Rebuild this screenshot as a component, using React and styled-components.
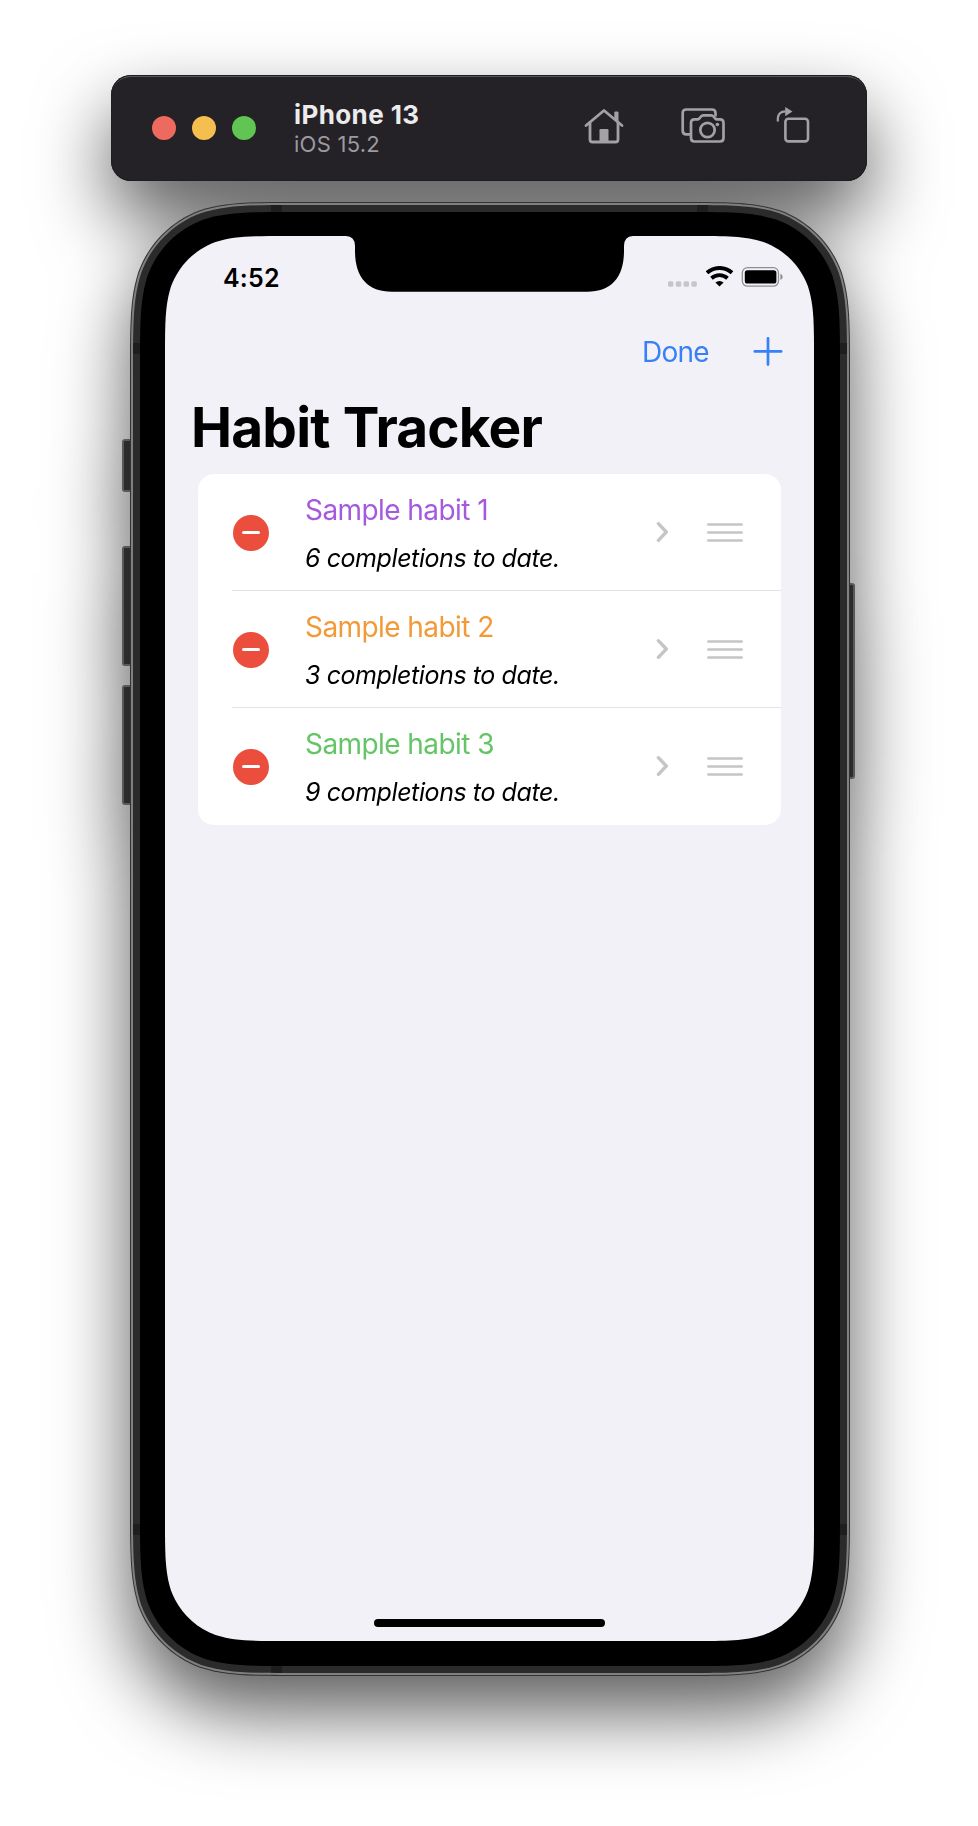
import React from "react";
import styled, { createGlobalStyle } from "styled-components";

const GlobalStyle = createGlobalStyle`
  html, body { margin: 0; padding: 0; background: #fff; }
  *, *::before, *::after { box-sizing: border-box; }
  body { font-family: Inter, "Liberation Sans", sans-serif; }
  svg { display: block; }
`;

// Rounded rectangle with continuous-curvature corners.
const smoothRect = (w, h, r) => {
  const p = [
    [1.528665, 0], [1.088493, 0], [0.868407, 0], [0.631494, 0.074911],
    [0.372824, 0.169059], [0.169059, 0.372824], [0.074911, 0.631494],
    [0, 0.868407], [0, 1.088493], [0, 1.528665],
  ].map(([a, b]) => [a * r, b * r]);
  const corner = (pts, fx, fy) => {
    const q = pts.map(([x, y]) => `${(fx ? w - x : x).toFixed(2)} ${(fy ? h - y : y).toFixed(2)}`);
    return `L${q[0]}C${q[1]} ${q[2]} ${q[3]}C${q[4]} ${q[5]} ${q[6]}C${q[7]} ${q[8]} ${q[9]}`;
  };
  const rev = [...p].reverse();
  return (
    "M" + w / 2 + " 0" + corner(p, true, false) + corner(rev, true, true) +
    corner(p, false, true) + corner(rev, false, false) + "Z"
  );
};

const Stage = styled.main`
  width: 978px;
  height: 1826px;
  padding-top: 75px;
  overflow: hidden;
`;

const Windows = styled.div`
  display: flex;
  flex-direction: column;
  gap: 21px;
  filter: drop-shadow(0 36px 37px rgba(0, 0, 0, 0.64));
`;

const TitleBar = styled.header`
  display: flex;
  align-items: center;
  width: 756px;
  height: 106px;
  margin-left: 111px;
  padding: 0 57px 0 41px;
  border-radius: 20px;
  background: #242227;
  box-shadow: inset 0 0 0 1px #1c1e1f, inset 0 2px 0 #55585a;
`;

const Lights = styled.div`
  display: flex;
  gap: 16px;
`;

const Light = styled.span`
  width: 24px;
  height: 24px;
  border-radius: 50%;
  background: ${(p) => p.$color};
`;

const DeviceLabel = styled.div`
  flex: 1;
  margin-left: 38px;
  padding-top: 1px;
`;

const DeviceName = styled.div`
  font-size: 26px;
  font-weight: 700;
  line-height: 32px;
  letter-spacing: 0.4px;
  color: #ececec;
`;

const DeviceOS = styled.div`
  font-size: 22px;
  line-height: 27px;
  letter-spacing: 0.25px;
  color: #9c999f;
`;

const Tools = styled.div`
  display: flex;
  align-items: center;
  padding-bottom: 4px;
`;

const Tool = styled.button`
  border: 0;
  padding: 0;
  margin-left: ${(p) => p.$gap || 0}px;
  background: none;
  color: #a3a0a6;
`;

const Phone = styled.section`
  position: relative;
  width: 720px;
  height: 1474px;
  margin-left: 130px;
`;

const SideButton = styled.span`
  position: absolute;
  left: ${(p) => (p.$right ? 716 : -8)}px;
  top: ${(p) => p.$top}px;
  width: ${(p) => (p.$right ? 9 : 12)}px;
  height: ${(p) => p.$height}px;
  border: 2px solid #58595a;
  border-radius: 3px;
  background: #2b2b2b;
`;

const Edge = styled.div`
  position: relative;
  width: 720px;
  height: 1474px;
  padding: 1px;
  background: #303234;
  clip-path: path("${smoothRect(720, 1474, 111)}");
`;

const Highlight = styled.div`
  width: 718px;
  height: 1472px;
  padding: 2px;
  background: #7f8081;
  clip-path: path("${smoothRect(718, 1472, 110)}");
`;

const Chassis = styled.div`
  position: relative;
  width: 714px;
  height: 1468px;
  padding: 7px;
  background: #2b2b2b;
  clip-path: path("${smoothRect(714, 1468, 108)}");
`;

const Antenna = styled.span`
  position: absolute;
  left: ${(p) => p.$x}px;
  top: ${(p) => p.$y}px;
  width: 11px;
  height: 11px;
  background: #1e1e1e;
`;

const Bezel = styled.div`
  position: relative;
  width: 700px;
  height: 1454px;
  padding: 24px 26px 25px 25px;
  background: #000;
  clip-path: path("${smoothRect(700, 1454, 101)}");
`;

const Screen = styled.div`
  position: relative;
  display: flex;
  flex-direction: column;
  width: 649px;
  height: 1405px;
  background: #f2f1f7;
  clip-path: path("${smoothRect(649, 1405, 80)}");
`;

const Notch = styled.svg`
  position: absolute;
  left: 181px;
  top: 0;
`;

const StatusBar = styled.div`
  display: flex;
  justify-content: space-between;
  height: 78px;
  padding: 26px 30px 0 58px;
`;

const Time = styled.span`
  font-size: 25px;
  font-weight: 600;
  line-height: 32px;
  letter-spacing: 0.2px;
`;

const StatusIcons = styled.div`
  display: flex;
  padding-top: 4px;
`;

const NavBar = styled.nav`
  display: flex;
  justify-content: flex-end;
  align-items: center;
  height: 75px;
  padding-right: 31px;
  color: #3880f7;
`;

const NavButton = styled.button`
  border: 0;
  padding: 0;
  margin-right: ${(p) => p.$gap || 0}px;
  background: none;
  font: 400 28px/34px Inter, "Liberation Sans", sans-serif;
  letter-spacing: ${(p) => p.$track || 0}px;
  color: inherit;
`;

const PageTitle = styled.h1`
  margin: 0;
  padding: 0 0 8px 26px;
  font-size: 55px;
  font-weight: 700;
  line-height: 77px;
  letter-spacing: -0.85px;
  word-spacing: 1px;
  white-space: nowrap;
  color: #000;
`;

const HabitList = styled.ul`
  width: 583px;
  margin: 0 0 0 33px;
  padding: 0;
  list-style: none;
  border-radius: 16px;
  background: #fff;
`;

const HabitRow = styled.li`
  display: flex;
  align-items: center;
  height: 117px;
  margin-left: 34px;
  padding: 1px 38px 0 1px;
  border-bottom: 1.5px solid #e3e3e5;
  &:last-child { border-bottom-color: transparent; }
`;

const DeleteButton = styled.button`
  display: flex;
  align-items: center;
  justify-content: center;
  width: 36px;
  height: 36px;
  border: 0;
  padding: 0;
  border-radius: 50%;
  background: #eb4e3d;
  &::after {
    content: "";
    width: 18px;
    height: 3px;
    border-radius: 1.5px;
    background: #fff;
  }
`;

const HabitText = styled.div`
  flex: 1;
  margin-left: 36px;
  padding-top: 2px;
  white-space: nowrap;
`;

const HabitName = styled.div`
  font-size: 28px;
  line-height: 36px;
  letter-spacing: -0.57px;
  color: ${(p) => p.$color};
`;

const HabitCount = styled.div`
  margin-top: 13px;
  font-size: 25px;
  line-height: 34px;
  font-style: italic;
  letter-spacing: -0.42px;
  color: #000;
`;

const RowIcons = styled.div`
  display: flex;
  align-items: center;
  gap: 38px;
  padding-bottom: 1px;
`;

const HomeIndicator = styled.div`
  width: 231px;
  height: 8px;
  margin: auto auto 14px;
  border-radius: 4px;
  background: #000;
`;

const HomeIcon = () => (
  <svg width="40" height="36" viewBox="0 0 40 36" fill="none" stroke="currentColor" strokeWidth="2.8" strokeLinecap="round" strokeLinejoin="round">
    <path d="M2 17.5 20 2.5 38 17.5" />
    <path d="M6 14.5V31.5Q6 34 8.5 34H31.5Q34 34 34 31.5V14.5" />
    <path d="M31.3 4.500H33.500V12.500L31.300 10.800Z" fill="currentColor" strokeWidth="2" />
    <path d="M15.500 34V22.200Q15.500 21 16.700 21H23.300Q24.500 21 24.500 22.200V34Z" fill="currentColor" stroke="none" />
  </svg>
);

const CameraIcon = () => (
  <svg width="44" height="36" viewBox="0 0 44 36" fill="none" stroke="currentColor" strokeWidth="2.7" strokeLinejoin="round">
    <path d="M9 26.300H5.200Q1.700 26.300 1.700 22.800V5Q1.700 1.500 5.200 1.500H31Q34.500 1.500 34.500 5V8.500" />
    <path d="M13.500 11.300H16.500Q17.500 11.300 18.300 10.500L20 8.500Q20.900 7.400 22.300 7.400H30.200Q31.600 7.400 32.500 8.500L34.200 10.500Q35 11.300 36 11.300H39Q42.500 11.300 42.500 14.800V30Q42.500 33.500 39 33.500H13.500Q10 33.500 10 30V14.800Q10 11.300 13.500 11.300Z" />
    <circle cx="26.500" cy="22" r="7.200" />
    <circle cx="36.400" cy="16.500" r="1.800" fill="currentColor" stroke="none" />
  </svg>
);

const RotateIcon = () => (
  <svg width="34" height="38" viewBox="0 0 34 38" fill="none" stroke="currentColor" strokeWidth="2.6">
    <rect x="9.400" y="11.800" width="22.600" height="22.600" rx="3" />
    <path d="M1.800 14.500V11.500Q2.200 4.600 9.500 4.400" strokeWidth="2.200" />
    <path d="M9.200 0V9.200L16.500 4.500Z" fill="currentColor" stroke="none" />
  </svg>
);

const CellDots = () => (
  <svg width="38" height="22" viewBox="0 0 38 22" fill="#c6c5ca">
    {[0, 7.8, 15.6, 23.4].map((x) => (
      <rect key={x} x={x} y="15.3" width="5.4" height="5.4" rx="1.5" />
    ))}
  </svg>
);

const WifiSvg = styled.svg`
  margin-right: 7px;
`;

const WifiIcon = () => (
  <WifiSvg width="28" height="22" viewBox="0 0 28 22" fill="none" stroke="#000" strokeWidth="3.9">
    <path d="M1 6.800A18.500 18.500 0 0 1 26 6.800" />
    <path d="M5.500 12.200A12 12 0 0 1 21.500 12.200" />
    <path d="M13.500 20.600 9.400 16.600A6 6 0 0 1 17.600 16.600Z" fill="#000" stroke="none" />
  </WifiSvg>
);

const BatteryIcon = () => (
  <svg width="43" height="22" viewBox="0 0 43 22">
    <rect x="1.300" y="1.600" width="36.200" height="18.600" rx="5.200" fill="none" stroke="#8f8e93" strokeWidth="1.300" />
    <rect x="3.800" y="4.200" width="31.600" height="13.400" rx="2.600" fill="#000" />
    <path d="M39.400 7.700V14Q41.700 13 41.700 10.900T39.400 7.700Z" fill="#8f8e93" />
  </svg>
);

const PlusIcon = () => (
  <svg width="30" height="30" viewBox="0 0 30 30" stroke="currentColor" strokeWidth="2.7" strokeLinecap="round">
    <path d="M15 1.200V27.600M1.800 14.400H28.200" />
  </svg>
);

const ChevronIcon = () => (
  <svg width="13" height="22" viewBox="0 0 13 22" fill="none" stroke="#c5c5c7" strokeWidth="3.4" strokeLinecap="round" strokeLinejoin="round">
    <path d="M2.400 2.700 10.300 11 2.400 19.300" />
  </svg>
);

const GripIcon = () => (
  <svg width="36" height="20" viewBox="0 0 36 20" stroke="#c5c5c7" strokeWidth="2.4" strokeLinecap="round">
    <path d="M1.200 2.500H34.800M1.200 10.500H34.800M1.200 18.500H34.800" />
  </svg>
);

const habits = [
  { name: "Sample habit 1", count: 6, color: "#a55ade" },
  { name: "Sample habit 2", count: 3, color: "#f19a37" },
  { name: "Sample habit 3", count: 9, color: "#65c466" },
];

const antennas = [[138, -4], [564, -4], [-4, 138], [707, 138], [-4, 1319], [707, 1319], [138, 1461]];

export default function App() {
  return (
    <Stage>
      <GlobalStyle />
      <Windows>
        <TitleBar>
          <Lights>
            <Light $color="#ed6a5e" />
            <Light $color="#f5bf4f" />
            <Light $color="#61c554" />
          </Lights>
          <DeviceLabel>
            <DeviceName>iPhone 13</DeviceName>
            <DeviceOS>iOS 15.2</DeviceOS>
          </DeviceLabel>
          <Tools>
            <Tool aria-label="Home"><HomeIcon /></Tool>
            <Tool $gap={57} aria-label="Screenshot"><CameraIcon /></Tool>
            <Tool $gap={51} aria-label="Rotate"><RotateIcon /></Tool>
          </Tools>
        </TitleBar>
        <Phone>
          <SideButton $top={237} $height={53} />
          <SideButton $top={344} $height={120} />
          <SideButton $top={483} $height={120} />
          <SideButton $right $top={381} $height={196} />
          <Edge>
            <Highlight>
              <Chassis>
                {antennas.map(([x, y]) => <Antenna key={`${x}-${y}`} $x={x} $y={y} />)}
                <Bezel>
                  <Screen>
                    <Notch width="287" height="56" viewBox="0 0 287 56">
                      <path d="M0 -1V0Q9 .5 9 10V16C9.500 42 22 55.700 46 55.700H241C265 55.700 277.500 42 278 16V10Q278 .5 287 0V-1Z" />
                    </Notch>
                    <StatusBar>
                      <Time>4:52</Time>
                      <StatusIcons>
                        <CellDots />
                        <WifiIcon />
                        <BatteryIcon />
                      </StatusIcons>
                    </StatusBar>
                    <NavBar>
                      <NavButton $gap={44} $track={-0.7}>Done</NavButton>
                      <NavButton aria-label="Add"><PlusIcon /></NavButton>
                    </NavBar>
                    <PageTitle>Habit Tracker</PageTitle>
                    <HabitList>
                      {habits.map((h) => (
                        <HabitRow key={h.name}>
                          <DeleteButton aria-label="Delete" />
                          <HabitText>
                            <HabitName $color={h.color}>{h.name}</HabitName>
                            <HabitCount>{h.count} completions to date.</HabitCount>
                          </HabitText>
                          <RowIcons>
                            <ChevronIcon />
                            <GripIcon />
                          </RowIcons>
                        </HabitRow>
                      ))}
                    </HabitList>
                    <HomeIndicator />
                  </Screen>
                </Bezel>
              </Chassis>
            </Highlight>
          </Edge>
        </Phone>
      </Windows>
    </Stage>
  );
}
